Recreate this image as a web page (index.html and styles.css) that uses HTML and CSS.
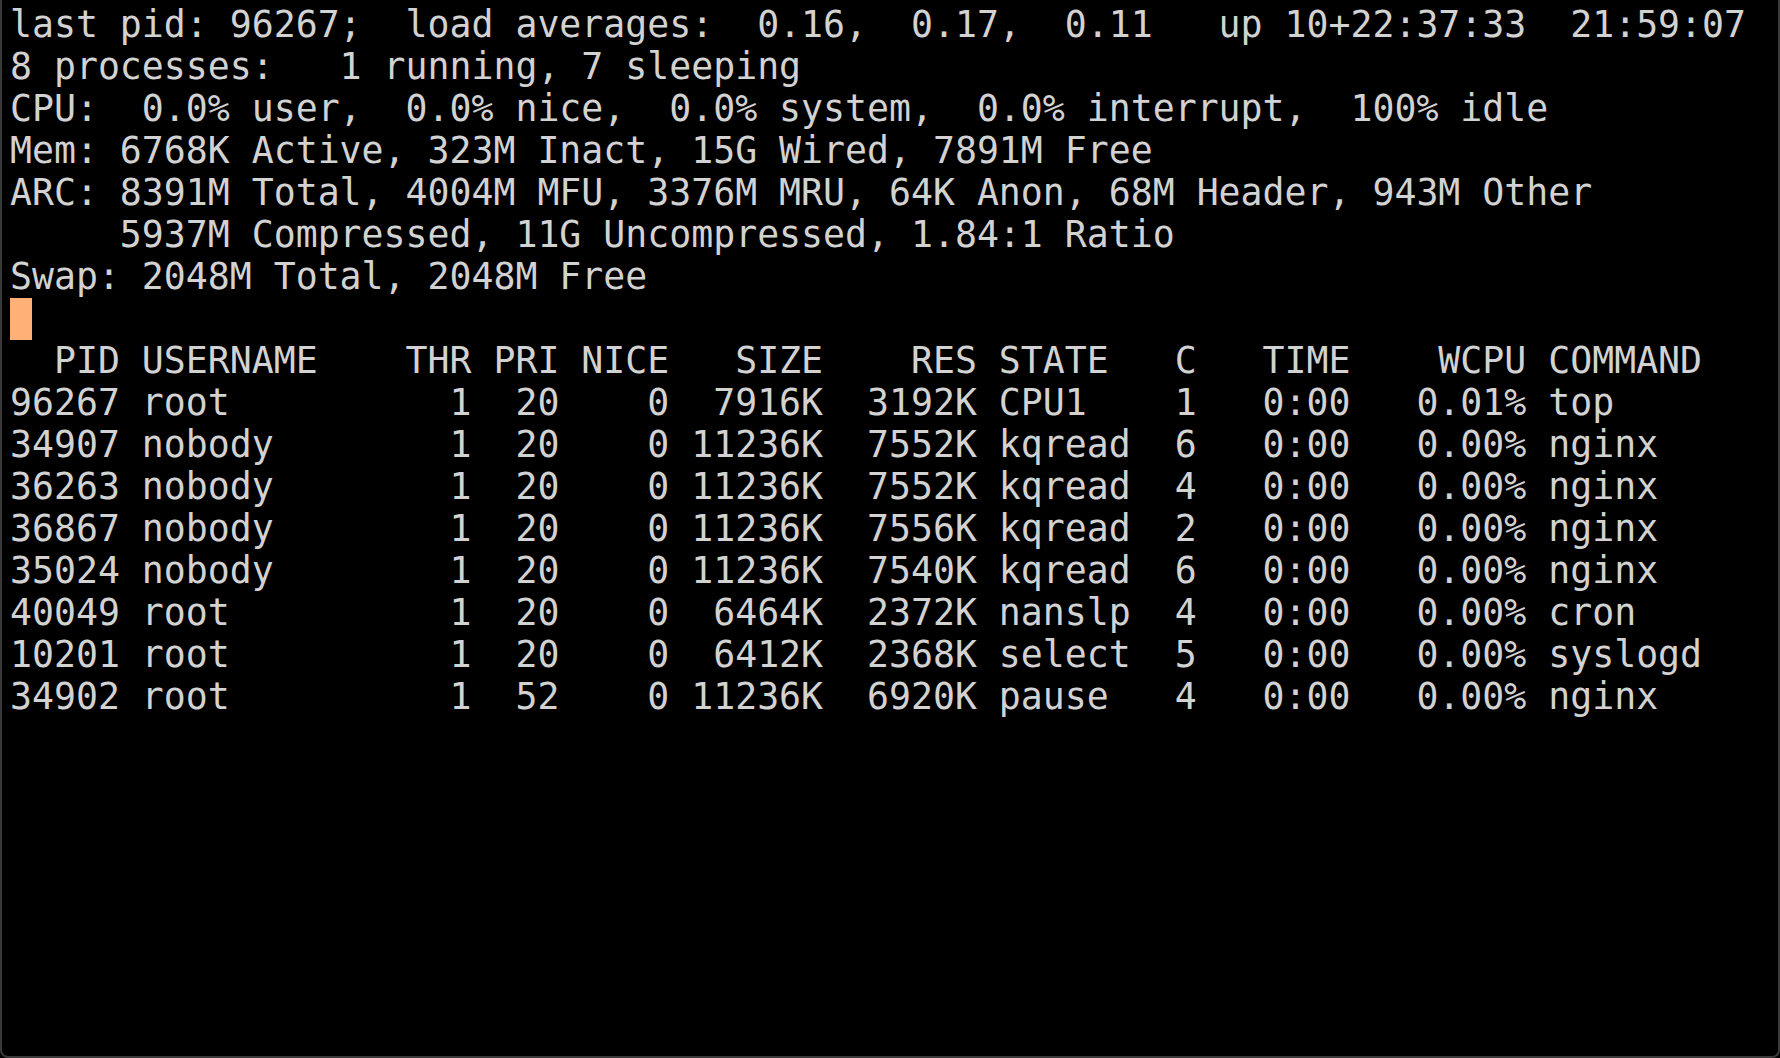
FILE: index.html
```html
<!DOCTYPE html>
<html lang="en">
<head>
    <meta charset="UTF-8">
    <title>top</title>
    <link rel="stylesheet" href="styles.css">
</head>
<body>
    <div class="terminal">
<pre class="screen">last pid: 96267;  load averages:  0.16,  0.17,  0.11   up 10+22:37:33  21:59:07
8 processes:   1 running, 7 sleeping
CPU:  0.0% user,  0.0% nice,  0.0% system,  0.0% interrupt,  100% idle
Mem: 6768K Active, 323M Inact, 15G Wired, 7891M Free
ARC: 8391M Total, 4004M MFU, 3376M MRU, 64K Anon, 68M Header, 943M Other
     5937M Compressed, 11G Uncompressed, 1.84:1 Ratio
Swap: 2048M Total, 2048M Free
<span class="cursor"></span>
  PID USERNAME    THR PRI NICE   SIZE    RES STATE   C   TIME    WCPU COMMAND
96267 root          1  20    0  7916K  3192K CPU1    1   0:00   0.01% top
34907 nobody        1  20    0 11236K  7552K kqread  6   0:00   0.00% nginx
36263 nobody        1  20    0 11236K  7552K kqread  4   0:00   0.00% nginx
36867 nobody        1  20    0 11236K  7556K kqread  2   0:00   0.00% nginx
35024 nobody        1  20    0 11236K  7540K kqread  6   0:00   0.00% nginx
40049 root          1  20    0  6464K  2372K nanslp  4   0:00   0.00% cron
10201 root          1  20    0  6412K  2368K select  5   0:00   0.00% syslogd
34902 root          1  52    0 11236K  6920K pause   4   0:00   0.00% nginx</pre>
    </div>
</body>
</html>
```

FILE: styles.css
```css
html, body {
    margin: 0;
    background: #000;
}
.terminal {
    box-sizing: border-box;
    width: 1780px;
    height: 1058px;
    background: #000;
    border: 2px solid #3a3a3a;
    border-top: none;
    border-radius: 0 0 8px 8px;
    padding: 4px 0 0 8px;
    overflow: hidden;
}
.screen {
    margin: 0;
    font-family: "DejaVu Sans Mono", monospace;
    font-size: 36.5px;
    line-height: 42px;
    color: #d2d2d2;
}
.cursor {
    display: inline-block;
    vertical-align: top;
    width: 22px;
    height: 42px;
    background: #ffb077;
}
```
